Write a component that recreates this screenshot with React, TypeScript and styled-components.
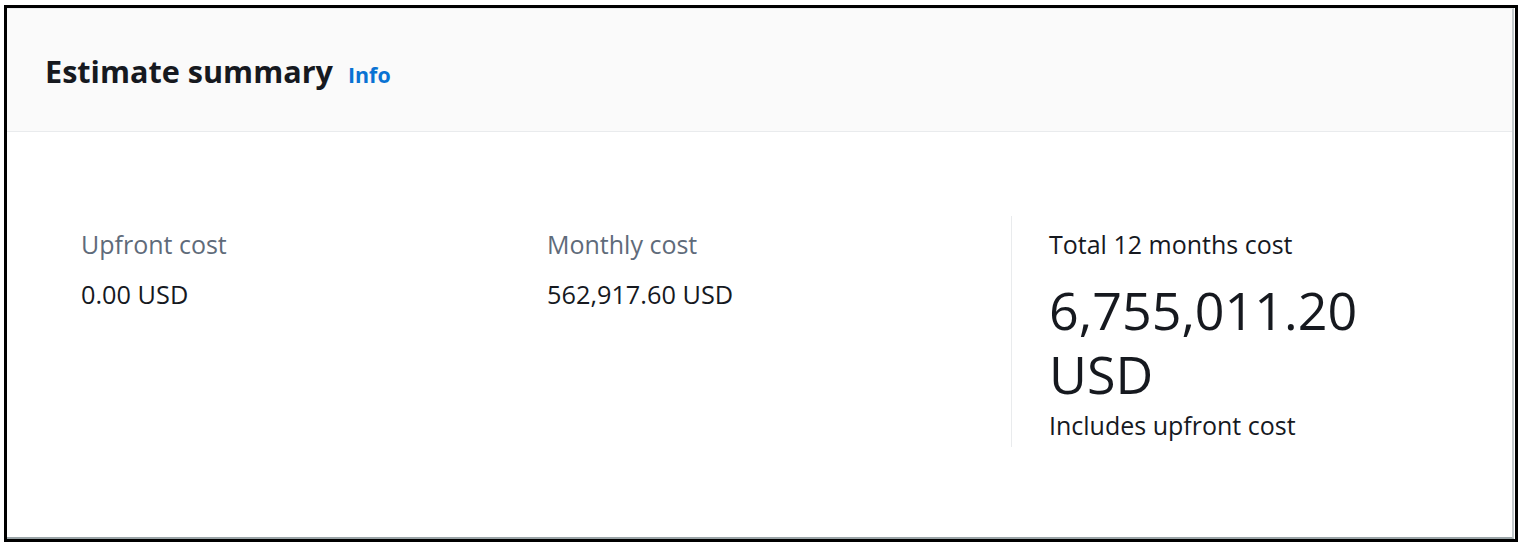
import React from "react";
import styled, { createGlobalStyle } from "styled-components";

const GlobalStyle = createGlobalStyle`
  html, body {
    margin: 0;
    padding: 0;
    background: #fff;
  }
  body {
    font-family: "Open Sans", "Noto Sans", sans-serif;
    color: #16191f;
  }
`;

const FrameSC = styled.div`
  box-sizing: border-box;
  width: 1514px;
  height: 537px;
  margin: 5px 0 0 4px;
  border: 3px solid #000;
  display: flex;
`;

const CardSC = styled.section`
  flex: 1;
  display: flex;
  flex-direction: column;
  margin-right: 1px;
  border-top: 1px solid #e9ebed;
  border-right: 2px solid #c3c9cc;
  border-bottom: 2px solid #9aa4a7;
  background: #fff;
`;

const HeaderSC = styled.header`
  height: 122px;
  display: flex;
  align-items: center;
  padding-left: 38px;
  background: #fafafa;
  border-bottom: 1px solid #e9ebed;
`;

const TitleRowSC = styled.div`
  display: flex;
  align-items: baseline;
  gap: 15px;
  margin-top: 1px;
`;

const TitleSC = styled.h2`
  margin: 0;
  font-size: 30.6px;
  font-weight: 700;
  color: #16191f;
`;

const InfoSC = styled.a`
  font-size: 21.4px;
  font-weight: 700;
  color: #0972d3;
  text-decoration: none;
`;

const BodySC = styled.div`
  padding: 84px 74px 0 74px;
  display: grid;
  grid-template-columns: 466px 464px 1fr;
  align-items: start;
`;

const ColumnSC = styled.div<{ divided?: boolean }>`
  display: flex;
  flex-direction: column;
  padding-top: 11px;
  padding-left: ${({ divided }) => (divided ? "37px" : "0")};
  padding-bottom: ${({ divided }) => (divided ? "5px" : "0")};
  border-left: ${({ divided }) => (divided ? "1px solid #e9ebed" : "none")};
`;

const LabelSC = styled.div<{ strong?: boolean }>`
  font-size: 25px;
  line-height: 34px;
  color: ${({ strong }) => (strong ? "#16191f" : "#5f6b7a")};
  margin-bottom: 16px;
`;

const ValueSC = styled.div`
  font-size: 25.3px;
  line-height: 34px;
  color: #16191f;
`;

const BigValueSC = styled.div`
  font-size: 52px;
  line-height: 64px;
  color: #16191f;
  margin-top: 1px;
`;

const NoteSC = styled.div`
  font-size: 25px;
  line-height: 34px;
  color: #16191f;
  margin-top: 2px;
`;

export default function App() {
  return (
    <>
      <GlobalStyle />
      <FrameSC>
        <CardSC>
          <HeaderSC>
            <TitleRowSC>
              <TitleSC>Estimate summary</TitleSC>
              <InfoSC href="#">Info</InfoSC>
            </TitleRowSC>
          </HeaderSC>
          <BodySC>
            <ColumnSC>
              <LabelSC>Upfront cost</LabelSC>
              <ValueSC>0.00 USD</ValueSC>
            </ColumnSC>
            <ColumnSC>
              <LabelSC>Monthly cost</LabelSC>
              <ValueSC>562,917.60 USD</ValueSC>
            </ColumnSC>
            <ColumnSC divided>
              <LabelSC strong>Total 12 months cost</LabelSC>
              <BigValueSC>6,755,011.20 USD</BigValueSC>
              <NoteSC>Includes upfront cost</NoteSC>
            </ColumnSC>
          </BodySC>
        </CardSC>
      </FrameSC>
    </>
  );
}
